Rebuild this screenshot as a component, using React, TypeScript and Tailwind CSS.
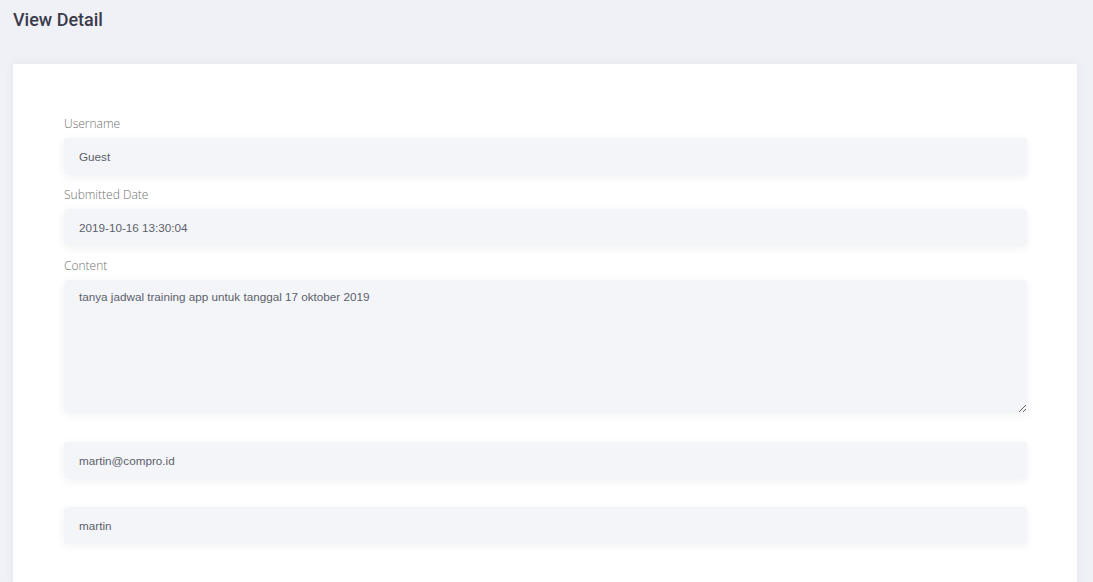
import React from 'react';

const inputCls =
  'w-full h-[37px] rounded-[4px] bg-[#f4f5f9] px-[15px] text-[11.7px] text-[#5c616b] outline-none shadow-[0_2px_10px_rgba(40,40,90,0.06)] font-["Liberation_Sans",Arial,sans-serif]';

const labelCls =
  'mb-[7px] text-[12px] leading-[15px] font-light text-[#707070] font-["Open_Sans",sans-serif]';

function Field({ label, value }: { label?: string; value: string }) {
  return (
    <div className="flex flex-col">
      {label && <label className={labelCls}>{label}</label>}
      <input className={inputCls} value={value} readOnly />
    </div>
  );
}

export default function App() {
  return (
    <div className="min-h-[582px] bg-[#f0f1f7] pl-[13px] pr-[16px] pt-[9px] overflow-hidden">
      <h1 className='text-[18px] leading-[22px] font-medium text-[#3b3b4a] font-["Roboto",sans-serif]'>View Detail</h1>
      <div className="mt-[33px] bg-white shadow-[0_0_10px_rgba(40,40,90,0.06)] pl-[51px] pr-[50px] pt-[52px] pb-[40px]">
        <div className="flex flex-col gap-[12px]">
          <Field label="Username" value="Guest" />
          <Field label="Submitted Date" value="2019-10-16 13:30:04" />
          <div className="flex flex-col">
            <label className={labelCls}>Content</label>
            <textarea
              className='w-full h-[133px] rounded-[4px] bg-[#f4f5f9] px-[15px] py-[10px] text-[11.7px] leading-[14px] text-[#5c616b] outline-none shadow-[0_2px_10px_rgba(40,40,90,0.06)] font-["Liberation_Sans",Arial,sans-serif]'
              value="tanya jadwal training app untuk tanggal 17 oktober 2019"
              readOnly
            />
          </div>
        </div>
        <div className="mt-[29px] flex flex-col gap-[28px]">
          <Field value="martin@compro.id" />
          <Field value="martin" />
        </div>
      </div>
    </div>
  );
}
